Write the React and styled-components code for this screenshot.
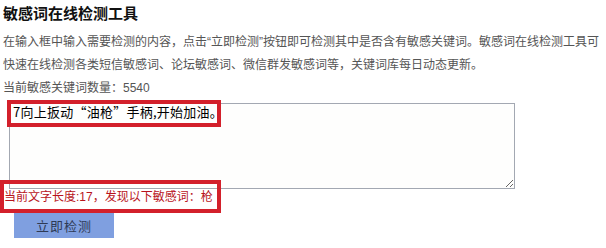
import React from "react";
import styled, { createGlobalStyle } from "styled-components";

const Global = createGlobalStyle`
  html, body { margin: 0; padding: 0; background: #ffffff; }
  body { font-family: "Liberation Sans", "Noto Sans CJK SC", sans-serif; }
`;

const Page = styled.div`
  position: relative;
  width: 606px;
  height: 248px;
  padding: 0 0 0 3px;
  box-sizing: border-box;
  overflow: hidden;
`;

const Title = styled.h1`
  margin: 2px 0 0;
  font-size: 15px;
  line-height: 24px;
  font-weight: 700;
  color: #111;
`;

const Intro = styled.p`
  margin: 5px 0 0;
  font-size: 12px;
  line-height: 23px;
  color: #555;
  white-space: nowrap;
`;

const Count = styled.div`
  font-size: 12px;
  line-height: 23px;
  color: #555;
`;

const Input = styled.textarea`
  display: block;
  margin: 3px 0 0 6px;
  width: 506px;
  height: 86px;
  box-sizing: border-box;
  border: 1px solid #a3a8b2;
  background: #fefefd;
  padding: 0 3px;
  font-family: "Noto Sans CJK SC", sans-serif;
  font-size: 13px;
  line-height: 16px;
  letter-spacing: 0.25px;
  color: #000;
  outline: none;
`;

const Result = styled.div`
  font-size: 12px;
  line-height: 16px;
  color: #b8141c;
  padding-left: 1px;
`;

const Button = styled.button`
  display: block;
  margin: 8px 0 0 11px;
  width: 100px;
  height: 25px;
  border: none;
  background: #7f9fe0;
  color: #2e3a55;
  font-family: "Noto Sans CJK SC", sans-serif;
  font-size: 13px;
  letter-spacing: 1px;
  padding: 0;
`;

const Callout = styled.div`
  position: absolute;
  left: ${(p) => p.$x}px;
  top: ${(p) => p.$y}px;
  width: ${(p) => p.$w}px;
  height: ${(p) => p.$h}px;
  box-sizing: border-box;
  border: 4px solid #d3202b;
  pointer-events: none;
`;

export default function App() {
  return (
    <Page>
      <Global />
      <Title>敏感词在线检测工具</Title>
      <Intro>
        在输入框中输入需要检测的内容，点击“立即检测”按钮即可检测其中是否含有敏感关键词。敏感词在线检测工具可
        <br />
        快速在线检测各类短信敏感词、论坛敏感词、微信群发敏感词等，关键词库每日动态更新。
      </Intro>
      <Count>当前敏感关键词数量：5540</Count>
      <Input defaultValue="7向上扳动“油枪”手柄,开始加油。" readOnly />
      <Result>当前文字长度:17，发现以下敏感词：枪</Result>
      <Button>立即检测</Button>
      <Callout $x={7} $y={100} $w={214} $h={27} />
      <Callout $x={0} $y={180} $w={221} $h={33} />
    </Page>
  );
}
